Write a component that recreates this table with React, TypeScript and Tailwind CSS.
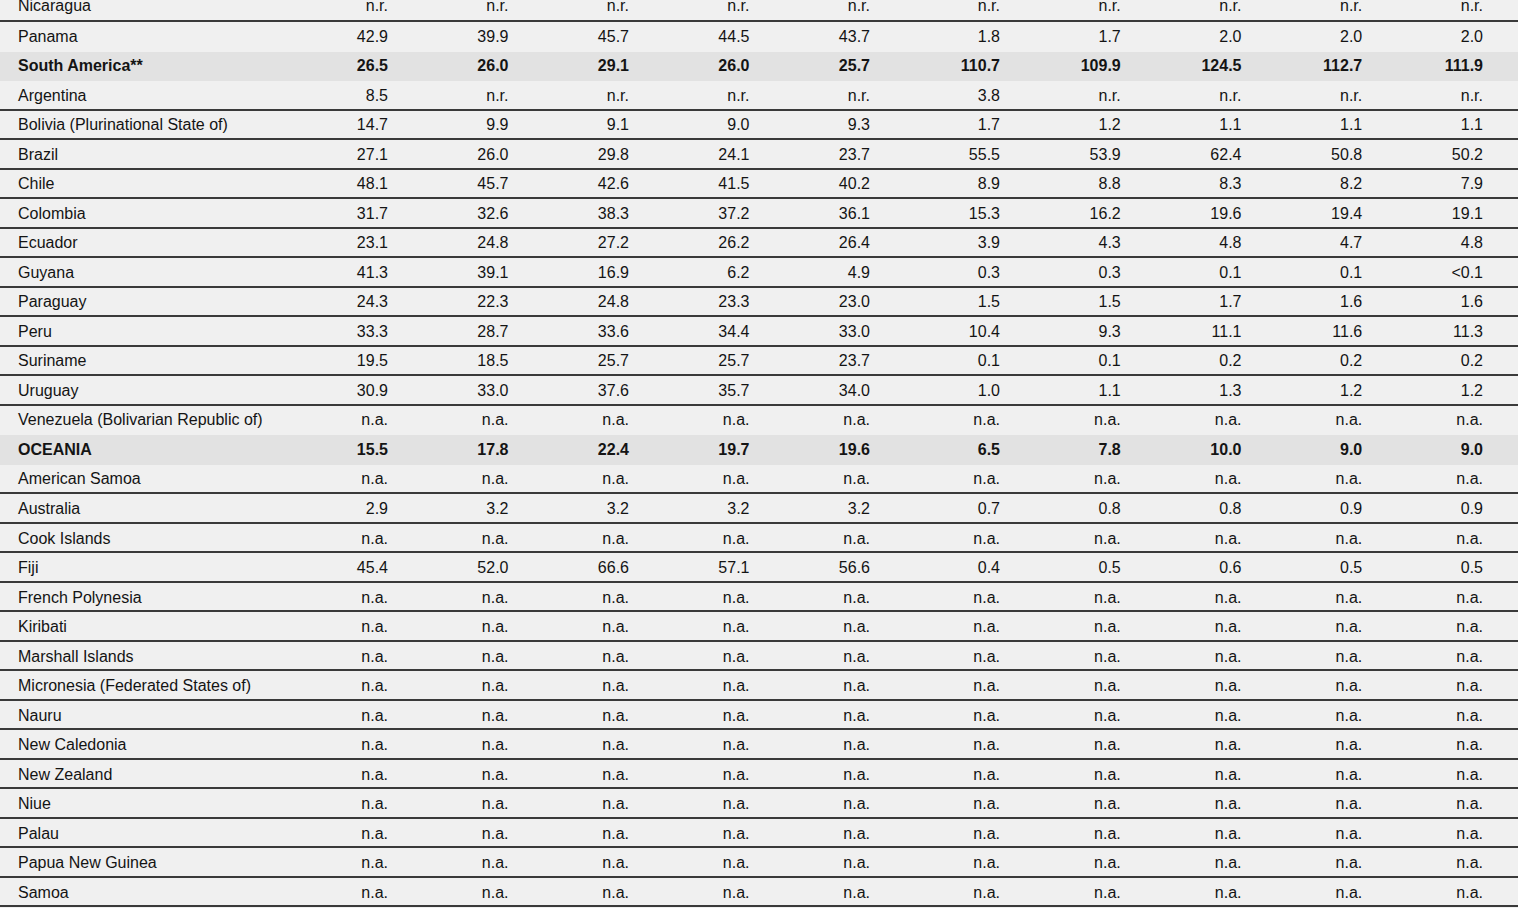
import React from "react";

type Row = { name: string; v: string[]; bold?: boolean };

const NA = Array(10).fill("n.a.");

const rows: Row[] = [
  { name: "Nicaragua", v: Array(10).fill("n.r.") },
  { name: "Panama", v: ["42.9", "39.9", "45.7", "44.5", "43.7", "1.8", "1.7", "2.0", "2.0", "2.0"] },
  { name: "South America**", bold: true, v: ["26.5", "26.0", "29.1", "26.0", "25.7", "110.7", "109.9", "124.5", "112.7", "111.9"] },
  { name: "Argentina", v: ["8.5", "n.r.", "n.r.", "n.r.", "n.r.", "3.8", "n.r.", "n.r.", "n.r.", "n.r."] },
  { name: "Bolivia (Plurinational State of)", v: ["14.7", "9.9", "9.1", "9.0", "9.3", "1.7", "1.2", "1.1", "1.1", "1.1"] },
  { name: "Brazil", v: ["27.1", "26.0", "29.8", "24.1", "23.7", "55.5", "53.9", "62.4", "50.8", "50.2"] },
  { name: "Chile", v: ["48.1", "45.7", "42.6", "41.5", "40.2", "8.9", "8.8", "8.3", "8.2", "7.9"] },
  { name: "Colombia", v: ["31.7", "32.6", "38.3", "37.2", "36.1", "15.3", "16.2", "19.6", "19.4", "19.1"] },
  { name: "Ecuador", v: ["23.1", "24.8", "27.2", "26.2", "26.4", "3.9", "4.3", "4.8", "4.7", "4.8"] },
  { name: "Guyana", v: ["41.3", "39.1", "16.9", "6.2", "4.9", "0.3", "0.3", "0.1", "0.1", "<0.1"] },
  { name: "Paraguay", v: ["24.3", "22.3", "24.8", "23.3", "23.0", "1.5", "1.5", "1.7", "1.6", "1.6"] },
  { name: "Peru", v: ["33.3", "28.7", "33.6", "34.4", "33.0", "10.4", "9.3", "11.1", "11.6", "11.3"] },
  { name: "Suriname", v: ["19.5", "18.5", "25.7", "25.7", "23.7", "0.1", "0.1", "0.2", "0.2", "0.2"] },
  { name: "Uruguay", v: ["30.9", "33.0", "37.6", "35.7", "34.0", "1.0", "1.1", "1.3", "1.2", "1.2"] },
  { name: "Venezuela (Bolivarian Republic of)", v: NA },
  { name: "OCEANIA", bold: true, v: ["15.5", "17.8", "22.4", "19.7", "19.6", "6.5", "7.8", "10.0", "9.0", "9.0"] },
  { name: "American Samoa", v: NA },
  { name: "Australia", v: ["2.9", "3.2", "3.2", "3.2", "3.2", "0.7", "0.8", "0.8", "0.9", "0.9"] },
  { name: "Cook Islands", v: NA },
  { name: "Fiji", v: ["45.4", "52.0", "66.6", "57.1", "56.6", "0.4", "0.5", "0.6", "0.5", "0.5"] },
  { name: "French Polynesia", v: NA },
  { name: "Kiribati", v: NA },
  { name: "Marshall Islands", v: NA },
  { name: "Micronesia (Federated States of)", v: NA },
  { name: "Nauru", v: NA },
  { name: "New Caledonia", v: NA },
  { name: "New Zealand", v: NA },
  { name: "Niue", v: NA },
  { name: "Palau", v: NA },
  { name: "Papua New Guinea", v: NA },
  { name: "Samoa", v: NA },
];

export default function App() {
  return (
    <div
      className="w-[1518px] h-[908px] overflow-hidden bg-[#f0f0f0] text-[#141414] text-[16px] leading-[18px]"
      style={{ fontFamily: '"Liberation Sans", Arial, sans-serif' }}
    >
      {rows.map((r, i) => {
        const next = rows[i + 1];
        const line = !r.bold && !(next && next.bold);
        const first = i === 0;
        return (
          <div
            key={r.name}
            className={
              "grid grid-cols-[267.5px_repeat(5,120.5px)_130px_repeat(4,120.75px)_35px] box-border " +
              (first ? "h-[22px] content-end pb-[5px] " : "h-[29.53px] items-center pt-[2px] ") +
              (line ? "border-b-2 border-[#3a3a3a] " : "border-b-2 border-transparent ") +
              (r.bold ? "bg-[#e2e2e2] font-bold" : "")
            }
          >
            <div className="pl-[18px] whitespace-nowrap">{r.name}</div>
            {r.v.map((x, j) => (
              <div key={j} className="text-right whitespace-nowrap">
                {x}
              </div>
            ))}
            <div />
          </div>
        );
      })}
    </div>
  );
}
